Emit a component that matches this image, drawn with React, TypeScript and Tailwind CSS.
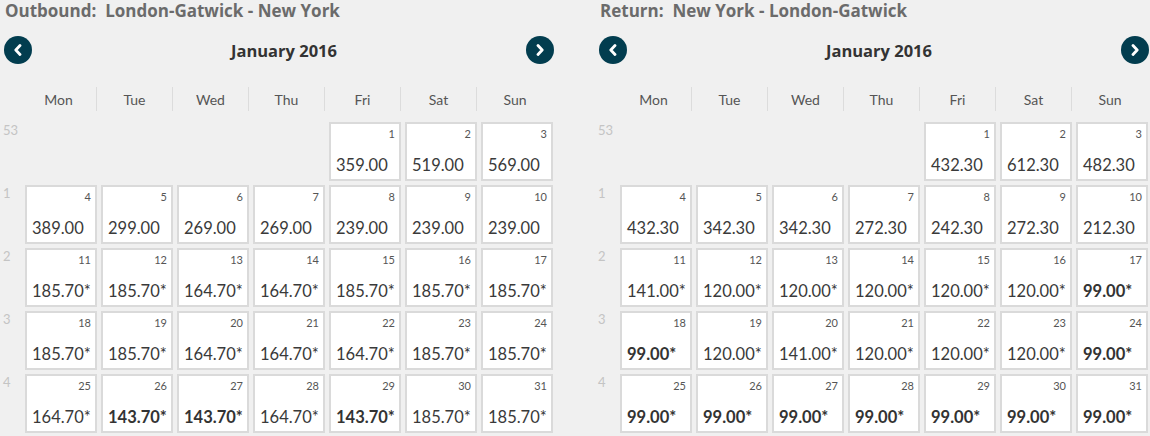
import React from 'react';

// One cell of the fare calendar
interface DayFare {
  day: number;
  price: string;
  cheapest?: boolean;
}

interface Week {
  num: number;
  days: (DayFare | null)[];
}

const DAY_NAMES = ['Mon', 'Tue', 'Wed', 'Thu', 'Fri', 'Sat', 'Sun'];

// Build weeks for January 2016 (starts on a Friday)
const buildWeeks = (prices: string[], cheapest: number[]): Week[] => {
  const weekNums = [53, 1, 2, 3, 4];
  const weeks: Week[] = [];
  let day = 1;
  for (let w = 0; w < 5; w++) {
    const days: (DayFare | null)[] = [];
    for (let d = 0; d < 7; d++) {
      if (w === 0 && d < 4) {
        days.push(null);
        continue;
      }
      days.push({ day, price: prices[day - 1], cheapest: cheapest.includes(day) });
      day++;
    }
    weeks.push({ num: weekNums[w], days });
  }
  return weeks;
};

const OUTBOUND_PRICES = [
  '359.00', '519.00', '569.00',
  '389.00', '299.00', '269.00', '269.00', '239.00', '239.00', '239.00',
  '185.70*', '185.70*', '164.70*', '164.70*', '185.70*', '185.70*', '185.70*',
  '185.70*', '185.70*', '164.70*', '164.70*', '164.70*', '185.70*', '185.70*',
  '164.70*', '143.70*', '143.70*', '164.70*', '143.70*', '185.70*', '185.70*',
];

const RETURN_PRICES = [
  '432.30', '612.30', '482.30',
  '432.30', '342.30', '342.30', '272.30', '242.30', '272.30', '212.30',
  '141.00*', '120.00*', '120.00*', '120.00*', '120.00*', '120.00*', '99.00*',
  '99.00*', '120.00*', '141.00*', '120.00*', '120.00*', '120.00*', '99.00*',
  '99.00*', '99.00*', '99.00*', '99.00*', '99.00*', '99.00*', '99.00*',
];

const Chevron: React.FC<{ dir: 'left' | 'right' }> = ({ dir }) => (
  <svg width="10" height="12" viewBox="0 0 10 12" fill="none">
    <path
      d={dir === 'left' ? 'M7 1.5L2.8 6L7 10.5' : 'M3 1.5L7.2 6L3 10.5'}
      stroke="white"
      strokeWidth="2.8"
      strokeLinecap="round"
      strokeLinejoin="round"
    />
  </svg>
);

const NavButton: React.FC<{ dir: 'left' | 'right' }> = ({ dir }) => (
  <button className="w-[28px] h-[28px] rounded-full bg-[#023d4f] flex items-center justify-center shrink-0">
    <Chevron dir={dir} />
  </button>
);

const CalendarPanel: React.FC<{ label: string; route: string; weeks: Week[] }> = ({ label, route, weeks }) => (
  <div className="w-[553px] shrink-0">
    <h2 className="h-[21px] pl-[5px] font-['Open_Sans',sans-serif] text-[17px] leading-[21px] font-bold text-[#6b6b6b] whitespace-pre">
      {label}:  {route}
    </h2>
    <div className="mt-[15px] ml-[4px] w-[550px] h-[28px] flex items-center">
      <NavButton dir="left" />
      <div className="flex-1 text-center pl-[10px] pt-[3px] font-['Open_Sans',sans-serif] text-[16.5px] font-bold text-[#333]">
        January 2016
      </div>
      <NavButton dir="right" />
    </div>
    <div className="mt-[23px] pl-[21px] flex">
      {DAY_NAMES.map((name, i) => (
        <div
          key={name}
          className={`w-[76px] h-[24px] flex items-center justify-center text-[14px] text-[#555] ${i < 6 ? 'border-r border-[#dcdcdc]' : ''}`}
        >
          {name}
        </div>
      ))}
    </div>
    <div className="mt-[11px] grid grid-cols-[21px_repeat(7,72px)] gap-[4px]">
      {weeks.map((week) => (
        <React.Fragment key={week.num}>
          <div className="pl-[3px] text-[13px] leading-[16px] text-[#c4c4c4]">{week.num}</div>
          {week.days.map((d, i) =>
            d ? (
              <div
                key={i}
                className="h-[59px] bg-white border-2 border-[#dadada] flex flex-col justify-between pr-[4px] pl-[5px] pt-[3px] pb-[4px]"
              >
                <div className="text-right text-[11px] leading-[13px] text-[#555]">{d.day}</div>
                <div className={`text-[16.5px] leading-[20px] ${d.cheapest ? 'font-bold text-[#333]' : 'text-[#3a3a3a]'}`}>
                  {d.price}
                </div>
              </div>
            ) : (
              <div key={i} />
            ),
          )}
        </React.Fragment>
      ))}
    </div>
  </div>
);

const App: React.FC = () => {
  const outbound = buildWeeks(OUTBOUND_PRICES, [26, 27, 29]);
  const inbound = buildWeeks(RETURN_PRICES, [17, 18, 24, 25, 26, 27, 28, 29, 30, 31]);

  return (
    <div className="w-[1150px] h-[436px] overflow-hidden bg-[#f0f0f0] flex gap-[42px] font-['Lato',sans-serif]">
      <CalendarPanel label="Outbound" route="London-Gatwick - New York" weeks={outbound} />
      <CalendarPanel label="Return" route="New York - London-Gatwick" weeks={inbound} />
    </div>
  );
};

export default App;
